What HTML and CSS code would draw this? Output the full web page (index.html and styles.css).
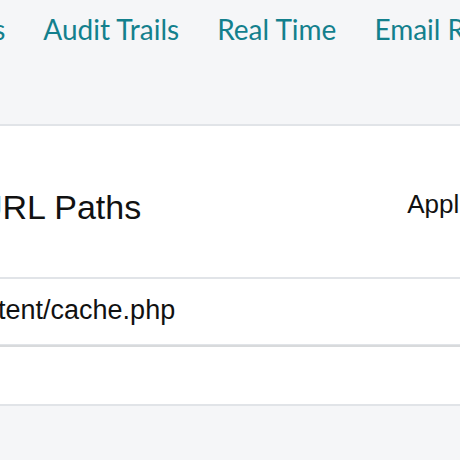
FILE: index.html
```html
<!DOCTYPE html>
<html>
<head>
<meta charset="utf-8">
<link rel="stylesheet" href="styles.css">
</head>
<body>
<div class="page">
  <nav class="tabs">
    <a class="tab">Reports</a>
    <a class="tab">Audit Trails</a>
    <a class="tab">Real Time</a>
    <a class="tab">Email Reports</a>
  </nav>
  <section class="panel">
    <header class="panel-head">
      <h2 class="title">URL Paths</h2>
      <span class="status">Applied</span>
    </header>
    <div class="table">
      <div class="row"><span class="path">wp-content/cache.php</span></div>
    </div>
    <div class="panel-foot"></div>
  </section>
</div>
</body>
</html>
```
FILE: styles.css
```css
html, body {
  margin: 0;
  padding: 0;
  background: #f5f6f8;
  overflow: hidden;
}
.page {
  margin-left: -120px;
  width: 900px;
}
.tabs {
  display: flex;
  gap: 38px;
  height: 124px;
  padding-left: 30px;
  padding-top: 12px;
  box-sizing: border-box;
  font-family: Lato, "Open Sans", sans-serif;
  font-size: 28px;
  color: #13808d;
}
.tab {
  white-space: nowrap;
}
.panel {
  background: #fff;
  border-top: 2px solid #e1e4e8;
  border-bottom: 2px solid #e1e4e8;
}
.panel-head {
  display: flex;
  justify-content: space-between;
  align-items: center;
  height: 151px;
  box-sizing: border-box;
  padding-top: 11px;
  padding-left: 98px;
  padding-right: 286px;
  font-family: "Liberation Sans", Arial, sans-serif;
}
.title {
  margin: 0;
  font-weight: 400;
  font-size: 34px;
  color: #111;
}
.status {
  font-size: 26px;
  color: #111;
  margin-bottom: 5px;
}
.table {
  border-top: 2px solid #e1e4e8;
  border-bottom: 2px solid #d8dadc;
}
.row {
  height: 66px;
  box-sizing: border-box;
  display: flex;
  align-items: center;
  padding-left: 31px;
  padding-bottom: 2px;
  border-bottom: 1px solid #e1e4e8;
  font-family: "Liberation Sans", Arial, sans-serif;
  font-size: 27px;
  color: #111;
}
.panel-foot {
  height: 57px;
}
```
